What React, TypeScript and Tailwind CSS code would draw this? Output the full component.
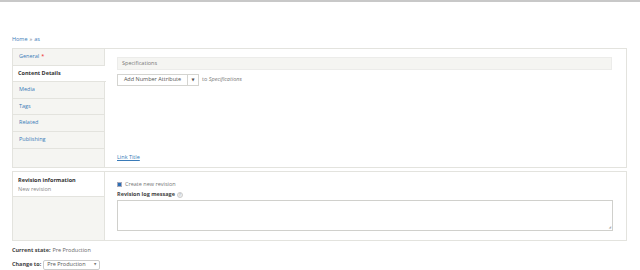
import React from "react";

const tabs = ["General", "Content Details", "Media", "Tags", "Related", "Publishing"];

export default function App() {
  return (
    <div className="w-[640px] h-[270px] overflow-hidden bg-white text-[#444] text-[5.5px] leading-none border-t-2 border-[#c8c8c8]" style={{ fontFamily: '"Open Sans", "DejaVu Sans", sans-serif' }}>
      <div className="px-[12px]">
        <div className="h-[46px] flex items-end pb-[6px] text-[#3a7bb8]">
          <span>Home</span><span className="mx-[2px] text-[#777]">»</span><span>as</span>
        </div>
        {/* Main tabbed box */}
        <div className="w-[615px] h-[120px] border border-[#e3e3de] flex">
          <div className="w-[92px] bg-[#f5f5f2] flex flex-col">
            {tabs.map((t, i) => {
              const active = i === 1;
              return (
                <div
                  key={t}
                  className={
                    active
                      ? "h-[16.6px] bg-white flex items-center px-[5px] font-bold text-[#333] border-b border-[#e3e3de] w-[93px]"
                      : "h-[16.6px] flex items-center px-[6px] text-[#3a7bb8] border-b border-[#e3e3de] border-r border-r-[#e3e3de]"
                  }
                >
                  {t}
                  {i === 0 && <span className="text-[#e22] ml-[2px]">*</span>}
                </div>
              );
            })}
            <div className="flex-1 border-r border-[#e3e3de]" />
          </div>
          <div className="flex-1 flex flex-col pl-[12px] pr-[14px] pt-[8px] pb-[7px]">
            <div className="h-[13px] bg-[#f5f5f2] border border-[#ececea] flex items-center px-[4px] text-[#777]">
              Specifications
            </div>
            <div className="mt-[4px] flex items-center">
              <div className="flex h-[12px] border border-[#d4d4d0] bg-white">
                <div className="w-[70px] flex items-center justify-center text-[#555] border-r border-[#d4d4d0]">Add Number Attribute</div>
                <div className="w-[10px] flex items-center justify-center text-[#555] text-[4px]">▼</div>
              </div>
              <span className="ml-[3px] text-[#777]">to <i>Specifications</i></span>
            </div>
            <div className="flex-1" />
            <a className="text-[#3a7bb8] underline">Link Title</a>
          </div>
        </div>
        {/* Revision box */}
        <div className="mt-[3px] w-[615px] h-[70px] border border-[#e3e3de] flex">
          <div className="w-[92px] bg-[#f5f5f2] flex flex-col border-r border-[#e3e3de]">
            <div className="h-[25px] bg-white border-b border-[#e3e3de] px-[5px] pt-[6px] flex flex-col gap-[3px]">
              <span className="font-bold text-[#333]">Revision information</span>
              <span className="text-[#888]">New revision</span>
            </div>
          </div>
          <div className="flex-1 flex flex-col pl-[12px] pr-[13px] pt-[10px]">
            <div className="flex items-center gap-[3px]">
              <span className="w-[5px] h-[5px] border border-[#aab] bg-white flex items-center justify-center">
                <span className="w-[3px] h-[3px] bg-[#2b6fb5]" />
              </span>
              <span className="text-[#777]">Create new revision</span>
            </div>
            <div className="mt-[4px] flex items-center gap-[2px]">
              <span className="font-bold text-[#444]">Revision log message</span>
              <span className="w-[6px] h-[6px] rounded-full border border-[#ccc] bg-[#eee] text-[4px] text-[#999] flex items-center justify-center">?</span>
            </div>
            <div className="mt-[2px] h-[31px] border border-[#d0d0cc] bg-white relative">
              <span className="absolute right-[1px] bottom-[1px] text-[3px] text-[#aaa]">◢</span>
            </div>
          </div>
        </div>
        <div className="mt-[7px] flex items-center">
          <span className="font-bold text-[#444]">Current state:</span>
          <span className="ml-[2px] text-[#666]">Pre Production</span>
        </div>
        <div className="mt-[6px] flex items-center">
          <span className="font-bold text-[#444]">Change to:</span>
          <div className="ml-[2px] w-[57px] h-[10px] border border-[#ccc] rounded-[2px] flex items-center justify-between px-[3px] text-[#555]">
            <span>Pre Production</span>
            <span className="text-[3px] text-[#777]">▼</span>
          </div>
        </div>
      </div>
    </div>
  );
}
